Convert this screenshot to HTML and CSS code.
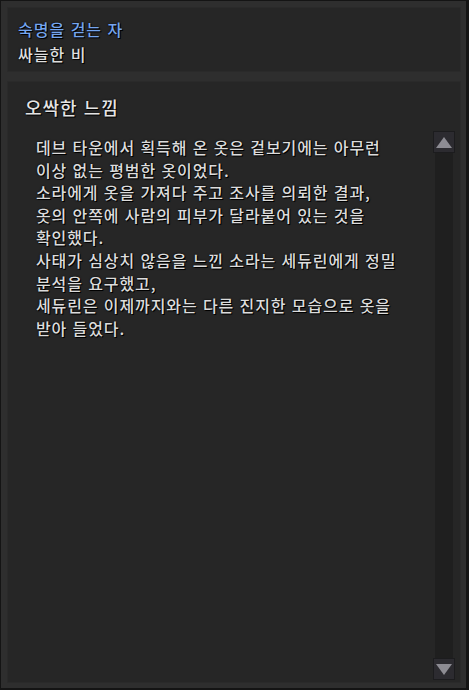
FILE: index.html
```html
<!DOCTYPE html>
<html lang="ko">
<head>
<meta charset="utf-8">
<link rel="stylesheet" href="styles.css">
</head>
<body>
<div class="window">
  <div class="panel header">
    <div class="name">숙명을 걷는 자</div>
    <div class="sub">싸늘한 비</div>
  </div>
  <div class="panel detail">
    <div class="title">오싹한 느낌</div>
    <div class="body">
      <div class="text">데브 타운에서 획득해 온 옷은 겉보기에는 아무런<br>이상 없는 평범한 옷이었다.<br>소라에게 옷을 가져다 주고 조사를 의뢰한 결과,<br>옷의 안쪽에 사람의 피부가 달라붙어 있는 것을<br>확인했다.<br>사태가 심상치 않음을 느낀 소라는 세듀린에게 정밀<br>분석을 요구했고,<br>세듀린은 이제까지와는 다른 진지한 모습으로 옷을<br>받아 들었다.</div>
      <div class="scrollbar">
        <div class="btn up"><span class="tri-up"></span></div>
        <div class="track"></div>
        <div class="btn down"><span class="tri-down"></span></div>
      </div>
    </div>
  </div>
</div>
</body>
</html>
```
FILE: styles.css
```css
html, body {
  margin: 0;
  padding: 0;
  background: #121212;
}
.window {
  box-sizing: border-box;
  width: 469px;
  height: 690px;
  background: #2e2e2e;
  border: 1px solid #141414;
  border-right-width: 3px;
  border-bottom-width: 2px;
  padding: 6px 5px 5px 6px;
  display: flex;
  flex-direction: column;
  gap: 9px;
  font-family: "Noto Sans CJK KR", "Noto Sans", sans-serif;
  color: #e0e0e0;
  text-shadow: 1px 1px 0 #000, 0 0 2px #000;
}
.panel {
  background: #262626;
  box-shadow: inset 0 0 0 1px #2a2a2a;
}
.header {
  height: 65px;
  box-sizing: border-box;
  padding: 10px 11px 0;
  display: flex;
  flex-direction: column;
}
.name {
  color: #75a5ee;
  font-size: 16px;
  line-height: 25px;
  font-weight: 500;
  letter-spacing: 1px;
}
.sub {
  font-size: 16px;
  line-height: 25px;
  font-weight: 500;
  letter-spacing: 1px;
  color: #dedede;
}
.detail {
  flex: 1;
  display: flex;
  flex-direction: column;
  padding: 0 6px 3px 0;
  min-height: 0;
}
.title {
  padding: 14px 0 0 18px;
  height: 50px;
  box-sizing: border-box;
  font-size: 18px;
  line-height: 24px;
  font-weight: 500;
  letter-spacing: 1px;
  color: #e4e4e4;
}
.body {
  flex: 1;
  display: flex;
  min-height: 0;
}
.text {
  flex: 1;
  padding: 5px 0 0 29px;
  font-size: 16px;
  line-height: 22.6px;
  font-weight: 500;
  letter-spacing: 0.9px;
  color: #dcdcdc;
}
.scrollbar {
  width: 22px;
  display: flex;
  flex-direction: column;
  align-items: center;
}
.btn {
  width: 22px;
  height: 22px;
  box-sizing: border-box;
  background: #2c2b30;
  border: 1px solid #1c1c1e;
  display: flex;
  align-items: center;
  justify-content: center;
}
.track {
  flex: 1;
  width: 18px;
  background: #1f1f1f;
}
.tri-up {
  width: 0;
  height: 0;
  border-left: 8px solid transparent;
  border-right: 8px solid transparent;
  border-bottom: 11px solid #8d8c93;
}
.tri-down {
  width: 0;
  height: 0;
  border-left: 8px solid transparent;
  border-right: 8px solid transparent;
  border-top: 11px solid #8d8c93;
}
```
